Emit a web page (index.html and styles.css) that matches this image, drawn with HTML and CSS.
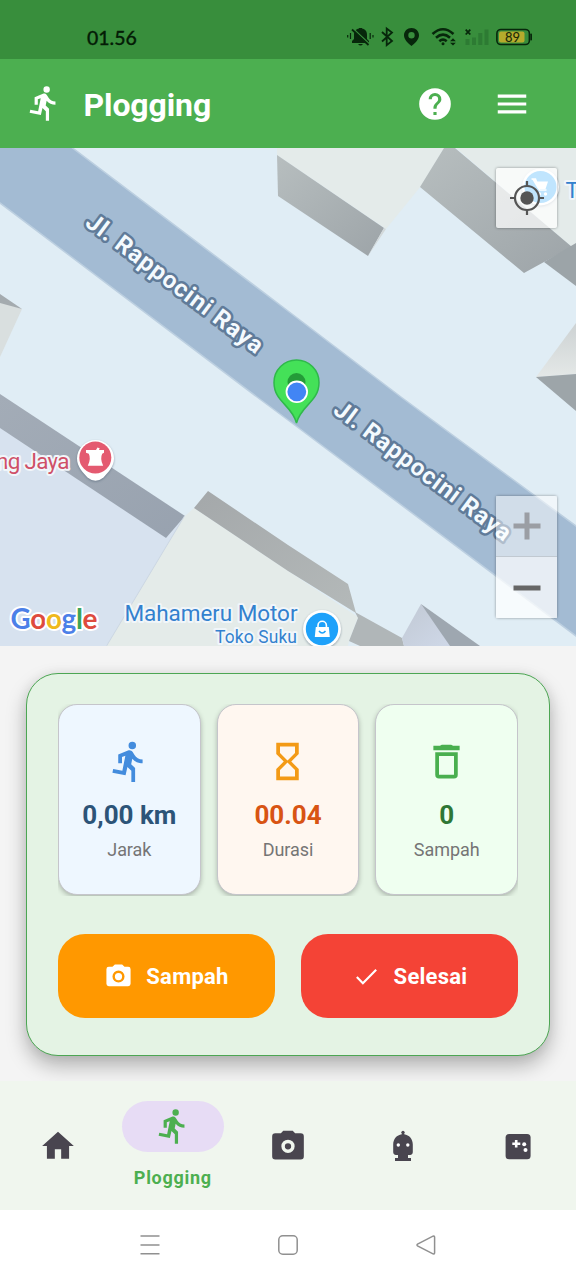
FILE: index.html
```html
<!DOCTYPE html>
<html lang="id">
<head>
<meta charset="utf-8">
<title>Plogging</title>
<link rel="stylesheet" href="styles.css">
</head>
<body>
<svg class="defs" width="0" height="0">
  <defs>
    <path id="run" d="M13.49 5.48a2 2 0 1 0 0-4 2 2 0 0 0 0 4M9.89 19.38l1-4.4 2.1 2v6h2v-7.5l-2.1-2 .6-3c1.3 1.5 3.3 2.5 5.5 2.5v-2c-1.9 0-3.5-1-4.3-2.4l-1-1.6c-.4-.6-1-1-1.7-1-.3 0-.5.1-.8.1l-5.2 2.2v4.7h2v-3.4l1.8-.7-1.6 8.1-4.9-1-.4 2z"/>
    <path id="camera" d="M4 4h3l2-2h6l2 2h3a2 2 0 0 1 2 2v12a2 2 0 0 1-2 2H4a2 2 0 0 1-2-2V6a2 2 0 0 1 2-2m8 3a5 5 0 1 0 0 10 5 5 0 0 0 0-10m0 2a3 3 0 1 1 0 6 3 3 0 0 1 0-6"/>
  </defs>
</svg>
<div class="screen">
  <div class="status">
    <span class="clock">01.56</span>
    <svg class="status-icons" width="188" height="22" viewBox="346 26 188 22">
      <g fill="#07270b">
        <path d="M352 43v-2l2-2v-4c0-4 2-6 5-6.500V28h3v.5c3 .5 5 2.500 5 6.500v4l2 2v2zM358 44h5q-2.500 3-5 0z"/>
        <path d="M353.500 29L369 43.500" stroke="#388e3c" stroke-width="1.500"/>
        <path d="M352 29.500L368.500 45" stroke="#07270b" stroke-width="1.800"/>
        <path d="M350.500 33v6M347.700 35v2.500M370.200 33v6M373 35v2.500" stroke="#07270b" stroke-width="1.200"/>
        <path d="M382 32l10 9-5.300 4.200V28.500L392 32.500l-10 9" fill="none" stroke="#07270b" stroke-width="1.800"/>
        <path fill-rule="evenodd" d="M411.500 28c-4.300 0-7.500 3.200-7.500 7.200 0 4.800 4.500 8.300 7.500 10.800 3-2.500 7.500-6 7.500-10.800 0-4-3.200-7.200-7.500-7.200m0 4a3.200 3.200 0 1 1 0 6.400 3.200 3.200 0 0 1 0-6.400"/>
        <g fill="none" stroke="#07270b" stroke-width="2.600"><path d="M432.500 34q10.500-9.500 21 0M436 37.700q7-6 14 0M439.300 41.200q3.700-3 7.400 0"/></g>
        <circle cx="443" cy="43.800" r="1.500"/>
        <path d="M450 41.200l3-3 2.800 3zM450 42.800l3 2.800 2.800-2.800z"/>
        <path d="M465.700 29.700l4.600 4.800m0-4.800l-4.600 4.800" stroke="#07270b" stroke-width="1.800"/>
      </g>
      <g fill="#2d7b33"><path d="M465.500 39h4v6h-4zM472 37.500h4V45h-4zM478.300 33h4v12h-4zM484.500 29.500h4V45h-4z"/></g>
      <rect x="496.900" y="29.500" width="32.500" height="15" rx="4" fill="none" stroke="#07270b" stroke-width="1.600"/>
      <rect x="499" y="31.500" width="25.500" height="11" rx="2" fill="#b5ab2c"/>
      <rect x="530.300" y="33.500" width="1.700" height="7" rx=".8" fill="#07270b"/>
      <text x="505" y="41.700" textLength="15" class="battery">89</text>
    </svg>
  </div>

  <header class="appbar">
    <svg class="ico-run" width="38.500" height="38.500" viewBox="0 0 24 24" fill="#fff"><use href="#run"/></svg>
    <h1>Plogging</h1>
    <svg class="ico-help" width="38" height="38" viewBox="0 0 24 24" fill="#fff"><path d="M15.070 11.250l-.9.920C13.450 12.890 13 13.500 13 15h-2v-.5c0-1.110.45-2.110 1.170-2.830l1.240-1.260c.37-.36.590-.86.590-1.410a2 2 0 0 0-4 0H8a4 4 0 1 1 8 0c0 .88-.36 1.670-.93 2.250M13 19h-2v-2h2M12 2a10 10 0 1 0 0 20 10 10 0 0 0 0-20"/></svg>
    <svg class="ico-menu" width="38" height="38" viewBox="0 0 24 24" fill="#fff"><path d="M3 6h18v2H3zM3 11h18v2H3zM3 16h18v2H3z"/></svg>
  </header>

  <section class="map">
    <svg width="576" height="498" viewBox="0 148 576 498">
      <defs>
        <linearGradient id="w1" x1="0" y1="0" x2="1" y2="1"><stop offset="0" stop-color="#b7bebf"/><stop offset="1" stop-color="#9da4a8"/></linearGradient>
        <linearGradient id="w2" x1="0" y1="0" x2="1" y2="1"><stop offset="0" stop-color="#a3acb7"/><stop offset="1" stop-color="#98a2af"/></linearGradient>
        <linearGradient id="w3" x1="0" y1="0" x2="1" y2="1"><stop offset="0" stop-color="#a4a8aa"/><stop offset="1" stop-color="#b4b9b9"/></linearGradient>
        <linearGradient id="w4" x1="0" y1="0" x2="0" y2="1"><stop offset="0" stop-color="#cdd2d3"/><stop offset="1" stop-color="#e4e8e7"/></linearGradient>
        <linearGradient id="w5" x1="0" y1="0" x2="1" y2="1"><stop offset="0" stop-color="#c1c9d4"/><stop offset="1" stop-color="#cfd8e8"/></linearGradient>
      </defs>
      <rect y="148" width="576" height="498" fill="#e0edf5"/>
      <path d="M-4 140H62L288 311 401 397 580 529V639L288 420 257 397-4 200z" fill="#a3bbd3" stroke="#bccfe0" stroke-width="1.500"/>
      <path d="M277 155V148H444L421 186 386 229z" fill="#e4ebea"/>
      <path d="M277 155L384 228 368 256 278 196z" fill="url(#w1)"/>
      <path d="M384 228L386 229 368 256z" fill="#d3d9da"/>
      <path d="M456 148H576V243L572 247z" fill="#e4ebea"/>
      <path d="M444 148H455L572 247 544 262 524 273 420 187z" fill="url(#w1)"/>
      <path d="M544 262L576 243V286z" fill="#9ca4a8"/>
      <path d="M576 323L536 377 576 374z" fill="url(#w4)"/>
      <path d="M536 377L576 374V411z" fill="#9da5a9"/>
      <path d="M0 302L22 309 0 357z" fill="#d9dfdf"/><path d="M0 294L22 309 0 303z" fill="#a4abaf"/>
      <path d="M0 427L166 538 185 516 107 646H0z" fill="#d7e2ef"/>
      <path d="M0 394L185 516 166 538 0 428z" fill="url(#w2)"/>
      <path d="M185 516L107 646" stroke="#cbd6e2" stroke-width="1.500"/>
      <path d="M185 516L194 508 288 571 358 617 349 641 348 646H107z" fill="#e4ebe9"/>
      <path d="M208 491L288 545 348 584 356 613 288 571 194 508z" fill="url(#w3)"/>
      <path d="M355 612L402 638 404 646H360L349 641 358 618z" fill="#b0b6b8"/>
      <path d="M421 604L402 638 404 646H452z" fill="url(#w5)"/>
      <path d="M421 604L480 646H450z" fill="#9ea7b0"/>

      <text class="street" transform="translate(84 225) rotate(37)" textLength="215">Jl. Rappocini Raya</text>
      <text class="street" transform="translate(332 412.500) rotate(37)" textLength="215">Jl. Rappocini Raya</text>

      <path d="M296.500 423C292 405 274 402 274 382.500a22.500 22.500 0 0 1 45 0C319 402 301 405 296.500 423z" fill="#44e158" stroke="#2fb94a" stroke-width="1.500"/>
      <circle cx="296.500" cy="382" r="9" fill="#249b38"/>
      <circle cx="296.800" cy="391.800" r="10.300" fill="#4285f4" stroke="#fff" stroke-width="1.800"/>

      <text class="place red" x="-4" y="469" textLength="73.500">ng Jaya</text>
      <path class="pin" d="M95.500 440a18.500 18.500 0 0 1 18.500 18.500c0 8-6 14-10.500 19q-8 6.500-16 0C83 472.500 77 466.500 77 458.500A18.500 18.500 0 0 1 95.500 440z" fill="#fff"/>
      <circle cx="95.300" cy="457.500" r="16" fill="#e45a70"/>
      <path d="M86 450h10l1.500-2.500 2.200.7-.7 1.800h5v2.800l-1.800.9q-2.500 5 1 12H87.800q3.500-7 1-12l-2.800-.9z" fill="#fff"/>

      <text class="place blue" x="124.500" y="620.500" textLength="173">Mahameru Motor</text>
      <text class="sub blue" x="215" y="642.500" textLength="82">Toko Suku</text>
      <circle class="pin" cx="322" cy="629" r="19" fill="#fff"/><circle cx="322" cy="629" r="16.200" fill="#1ea1fa"/>
      <path d="M318 627v-1.500a4.200 4.200 0 0 1 8.400 0v1.500" fill="none" stroke="#fff" stroke-width="1.600"/>
      <path d="M315.800 627h13l1 10h-15z" fill="#fff"/><path d="M319 631q3.300 4 6.500 0" fill="none" stroke="#1ea1fa" stroke-width="1.500"/>

      <circle class="pin" cx="540.500" cy="187" r="18.500" fill="#fff"/><circle cx="540.500" cy="187" r="16" fill="#1ea1fa"/>
      <path d="M532 179h3.500l1 2.500H548l-2.500 7.500h-7.500z" fill="#fff"/><path d="M531.500 179h4l4 11h7" stroke="#fff" fill="none" stroke-width="1.500"/><circle cx="539.500" cy="194" r="1.700" fill="#fff"/><circle cx="545.500" cy="194" r="1.700" fill="#fff"/>
      <text class="place blue" x="565.500" y="198">T</text>

      <text class="google" x="10.500" y="628.500" textLength="87"><tspan fill="#4c80e8">G</tspan><tspan fill="#de4b3e">o</tspan><tspan fill="#efb91c">o</tspan><tspan fill="#4c80e8">g</tspan><tspan fill="#3da456">l</tspan><tspan fill="#de4b3e">e</tspan></text>
    </svg>
    <div class="ctl locate">
      <svg width="36" height="36" viewBox="0 0 36 36"><g fill="none" stroke="#555" stroke-width="2.200"><circle cx="18" cy="18" r="12"/><path d="M18 1v6M18 29v6M1 18h6M29 18h6"/></g><circle cx="18" cy="18" r="6.700" fill="#555"/></svg>
    </div>
    <div class="ctl zoom">
      <div class="zin"><svg width="28" height="28" viewBox="0 0 28 28"><path d="M.5 14h27M14 .5v27" stroke="#9b9ea4" stroke-width="5"/></svg></div>
      <div class="zout"><svg width="28" height="28" viewBox="0 0 28 28"><path d="M.5 14h27" stroke="#666" stroke-width="5"/></svg></div>
    </div>
  </section>

  <main class="content">
    <div class="panel">
      <div class="stats">
        <div class="stat blue-card">
          <svg width="45" height="45" viewBox="0 0 24 24" fill="#438cdd"><use href="#run"/></svg>
          <strong>0,00 km</strong><span>Jarak</span>
        </div>
        <div class="stat orange-card">
          <svg width="45" height="45" viewBox="0 0 24 24" fill="#f39a16"><path d="M6 2v6h.010L6 8.010 10 12l-4 4 .010.010H6V22h12v-5.990h-.010L18 16l-4-4 4-3.990-.010-.010H18V2zm10 14.500V20H8v-3.500l4-4zm-4-5l-4-4V4h8v3.500z"/></svg>
          <strong>00.04</strong><span>Durasi</span>
        </div>
        <div class="stat green-card">
          <svg width="45" height="45" viewBox="0 0 24 24" fill="#49af4f"><path fill-rule="evenodd" d="M8.500 3.600L9.500 3h5l1 .6H19V6H5V3.600zM6 7h12v12a2 2 0 0 1-2 2H8a2 2 0 0 1-2-2zm2 2v10h8V9z"/></svg>
          <strong>0</strong><span>Sampah</span>
        </div>
      </div>
      <div class="actions">
        <button class="btn orange"><svg width="29" height="29" viewBox="0 0 24 24" fill="#fff"><use href="#camera"/></svg><span>Sampah</span></button>
        <button class="btn redbtn"><svg width="29" height="29" viewBox="0 0 24 24"><path d="M4 12.500l5 5L20 6.500" fill="none" stroke="#fff" stroke-width="1.800"/></svg><span>Selesai</span></button>
      </div>
    </div>
  </main>

  <nav class="tabs">
    <a class="tab"><svg width="38" height="38" viewBox="0 0 24 24" fill="#49454f"><path d="M10 20v-6h4v6h5v-8h3L12 3 2 12h3v8z"/></svg></a>
    <a class="tab active"><span class="pill"><svg width="38.500" height="38.500" viewBox="0 0 24 24" fill="#4caf50"><use href="#run"/></svg></span><span class="tab-label">Plogging</span></a>
    <a class="tab"><svg width="38" height="38" viewBox="0 0 24 24" fill="#49454f"><path fill-rule="evenodd" d="M4 4h3.500L9 2.300h6L16.500 4H20a2 2 0 0 1 2 2v12.500a2 2 0 0 1-2 2H4a2 2 0 0 1-2-2V6a2 2 0 0 1 2-2m8 4a4.200 4.200 0 1 0 0 8.400A4.200 4.200 0 0 0 12 8m0 2.200a2 2 0 1 1 0 4 2 2 0 0 1 0-4"/></svg></a>
    <a class="tab"><svg width="38" height="38" viewBox="0 0 38 38"><g fill="#49454f"><circle cx="19" cy="5.300" r="1.600"/><path d="M17.800 5.500h2.400v1.700c5 .7 8.600 4.800 8.600 10.300v7.500q0 2.500-2.800 3h-2v3h3v3H11v-3h3v-3h-2q-2.800-.5-2.800-3v-7.500c0-5.500 3.600-9.600 8.600-10.300z"/></g><circle cx="14.300" cy="18" r="1.700" fill="#fff"/><circle cx="23.800" cy="18" r="1.700" fill="#fff"/></svg></a>
    <a class="tab"><svg width="38" height="38" viewBox="0 0 38 38"><rect x="6.600" y="7" width="25" height="25.300" rx="3.500" fill="#49454f"/><path d="M13.300 16.700h8M17.200 12.900v7.700" stroke="#fff" stroke-width="2.600"/><circle cx="25.200" cy="17.200" r="2" fill="#fff"/><circle cx="26.500" cy="23" r="2" fill="#fff"/></svg></a>
  </nav>

  <div class="sysnav">
    <svg width="20" height="20" viewBox="0 0 20 20"><path d="M.5 1h19M.5 10h19M.5 18.700h19"/></svg>
    <svg width="20" height="20" viewBox="0 0 20 20"><rect x=".8" y=".8" width="18.400" height="18.400" rx="4"/></svg>
    <svg width="20" height="20" viewBox="0 0 20 20"><path d="M1.500 9.200L17 1.200q1.600-.5 1.600 1v15.600q0 1.500-1.600 1L1.500 10.800q-1-.8 0-1.600z"/></svg>
  </div>
</div>
</body>
</html>
```
FILE: styles.css
```css
* { box-sizing: border-box; }
body { margin: 0; font-family: Roboto, "Liberation Sans", sans-serif; background: #fff; }
svg { display: block; flex: none; }
.defs { position: absolute; }
.screen { width: 576px; height: 1280px; display: flex; flex-direction: column; overflow: hidden; }

.status { height: 59px; background: #388e3c; display: flex; justify-content: space-between; align-items: flex-end; padding: 0 42px 11px 87px; flex: none; }
.clock { font: 500 19.500px/21px Lato, sans-serif; color: #041c06; -webkit-text-stroke: .3px #041c06; }
.battery { font: 500 13px Lato, sans-serif; fill: #1c2c08; }

.appbar { height: 89px; background: #4caf50; display: flex; align-items: center; padding: 0 45px 0 25px; flex: none; color: #fff; }
.appbar h1 { margin: 2px auto 0 20px; font-size: 32px; line-height: 38px; font-weight: 700; letter-spacing: -.1px; }
.ico-help { margin-right: 39px; }

.map { height: 498px; position: relative; flex: none; overflow: hidden; }
.street { font-size: 24px; font-weight: 700; fill: #f4fafe; stroke: #607b99; stroke-width: 5px; stroke-linejoin: round; paint-order: stroke; }
.place { font-size: 22.500px; stroke: #f1f6fa; stroke-width: 4px; stroke-linejoin: round; paint-order: stroke; }
.sub { font-size: 17.500px; stroke: #f1f6fa; stroke-width: 4px; stroke-linejoin: round; paint-order: stroke; }
.red { fill: #cf5068; }
.blue { fill: #3381ce; }
.google { font: 700 28px Lato, sans-serif; stroke: #fff; stroke-width: 4px; stroke-linejoin: round; paint-order: stroke; }
.pin { filter: drop-shadow(0 1px 1px rgba(70, 90, 110, .5)); }
.ctl { position: absolute; left: 496px; width: 61px; border-radius: 2px; box-shadow: 0 0 3px rgba(0, 0, 0, .4); }
.locate { top: 20px; height: 60px; background: rgba(255, 255, 255, .72); display: grid; place-items: center; }
.zoom { top: 348px; height: 122px; }
.zin, .zout { height: 61px; display: grid; place-items: center; }
.zin { background: rgba(255, 255, 255, .5); border-bottom: 1px solid #c1c9d1; }
.zout { background: rgba(255, 255, 255, .74); }

.content { height: 435px; padding: 27px 26px 0; background: #f4f4f4; overflow: hidden; flex: none; }
.panel { height: 383px; padding: 30px 31px 0; background: #e4f3e4; border: 1.500px solid #4ca653; border-radius: 32px; box-shadow: 0 10px 20px rgba(0, 0, 0, .27), 0 0 12px rgba(0, 0, 0, .06); }
.stats { height: 192px; display: grid; grid-template-columns: repeat(3, 1fr); gap: 16px; overflow: hidden; }
.stat { height: 191px; border: 1.500px solid #c5c5cb; border-radius: 19px; display: flex; flex-direction: column; align-items: center; padding-top: 34px; box-shadow: 0 2px 5px rgba(0, 0, 0, .25); }
.stat strong { margin-top: 14px; font-size: 26px; line-height: 34px; }
.stat span { margin-top: 6px; font-size: 18px; line-height: 24px; color: #757575; letter-spacing: -.05px; }
.blue-card { background: #eef7ff; color: #2c5478; }
.orange-card { background: #fff7f0; color: #d85413; }
.green-card { background: #effff0; color: #2e7735; }
.actions { margin-top: 38px; display: grid; grid-template-columns: 1fr 1fr; gap: 26px; }
.btn { height: 84px; border: 0; border-radius: 27px; display: flex; align-items: center; justify-content: center; gap: 13px; color: #fff; font: 700 22px/30px Roboto, sans-serif; letter-spacing: .25px; padding: 0; }
.btn span { margin-top: 2px; }
.orange { background: #ff9800; }
.redbtn { background: #f44336; }

.tabs { height: 129px; background: #f0f6ee; display: grid; grid-template-columns: repeat(5, 1fr); flex: none; }
.tab { display: flex; flex-direction: column; align-items: center; justify-content: center; }
.active { justify-content: flex-start; padding-top: 20px; }
.pill { width: 102px; height: 51px; border-radius: 26px; background: #e7dcf5; display: grid; place-items: center; }
.tab-label { margin-top: 14px; font-size: 18px; line-height: 24px; font-weight: 700; letter-spacing: .7px; color: #4caf50; }

.sysnav { height: 70px; background: #fff; display: flex; justify-content: center; align-items: center; gap: 118px; flex: none; }
.sysnav svg { fill: none; stroke: #909090; stroke-width: 1.500; }
```
